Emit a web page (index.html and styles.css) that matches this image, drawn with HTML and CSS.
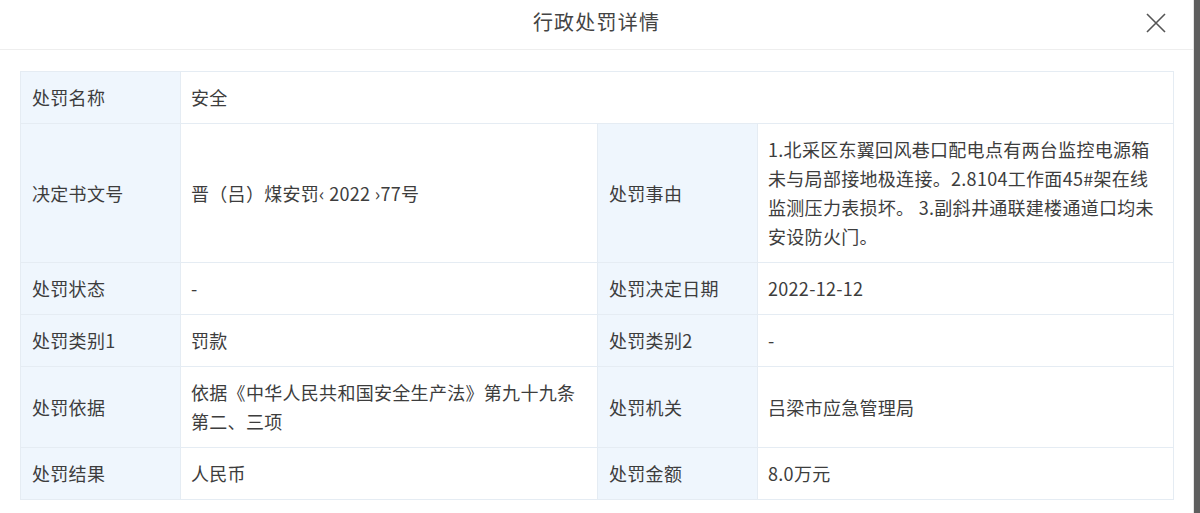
FILE: index.html
```html
<!DOCTYPE html>
<html lang="zh-CN">
<head>
<meta charset="utf-8">
<title>行政处罚详情</title>
<link rel="stylesheet" href="styles.css">
</head>
<body>
<div class="screen">
  <div class="modal">
    <div class="modal-header">
      <div class="modal-title">行政处罚详情</div>
      <button class="close-btn" aria-label="关闭">
        <svg width="20" height="20" viewBox="0 0 20 20"><path d="M1 1 L19 19 M19 1 L1 19" stroke="#555" stroke-width="1.6" fill="none"/></svg>
      </button>
    </div>
    <div class="modal-body">
      <table class="detail">
        <colgroup>
          <col class="c-label"><col class="c-value"><col class="c-label"><col class="c-value2">
        </colgroup>
        <tr>
          <th>处罚名称</th>
          <td colspan="3">安全</td>
        </tr>
        <tr>
          <th>决定书文号</th>
          <td>晋（吕）煤安罚‹ 2022 ›77号</td>
          <th>处罚事由</th>
          <td>1.北采区东翼回风巷口配电点有两台监控电源箱未与局部接地极连接。2.8104工作面45#架在线监测压力表损坏。 3.副斜井通联建楼通道口均未安设防火门。</td>
        </tr>
        <tr>
          <th>处罚状态</th>
          <td>-</td>
          <th>处罚决定日期</th>
          <td>2022-12-12</td>
        </tr>
        <tr>
          <th>处罚类别1</th>
          <td>罚款</td>
          <th>处罚类别2</th>
          <td>-</td>
        </tr>
        <tr>
          <th>处罚依据</th>
          <td>依据《中华人民共和国安全生产法》第九十九条第二、三项</td>
          <th>处罚机关</th>
          <td>吕梁市应急管理局</td>
        </tr>
        <tr>
          <th>处罚结果</th>
          <td>人民币</td>
          <th>处罚金额</th>
          <td>8.0万元</td>
        </tr>
      </table>
    </div>
  </div>
  <div class="mask-edge"></div>
</div>
</body>
</html>
```
FILE: styles.css
```css
* { box-sizing: border-box; }
html, body {
  margin: 0;
  padding: 0;
  background: #fff;
}
body {
  font-family: "Noto Sans CJK SC", "Noto Sans", sans-serif;
  color: #3c3c3c;
}
.screen {
  display: flex;
  width: 1200px;
  height: 513px;
  overflow: hidden;
}
.modal {
  width: 1194px;
  background: #fff;
  border-right: 1px solid #e4e4e4;
}
.mask-edge {
  flex: 1;
  background: #5e5e5e;
}
.modal-header {
  position: relative;
  height: 50px;
  border-bottom: 1px solid #eeeeee;
  display: flex;
  align-items: center;
  justify-content: center;
}
.modal-title {
  font-size: 20px;
  color: #444;
  letter-spacing: 1.2px;
  margin-top: -6px;
}
.close-btn {
  position: absolute;
  right: 27px;
  top: 13px;
  width: 20px;
  height: 20px;
  padding: 0;
  border: 0;
  background: none;
  display: flex;
}
.modal-body {
  padding: 21px 20px 0 20px;
}
.detail {
  width: 1153px;
  border-collapse: collapse;
  table-layout: fixed;
  font-size: 18px;
  letter-spacing: 0.3px;
  line-height: 29px;
}
.c-label { width: 160px; }
.c-value { width: 417px; }
.c-value2 { width: 416px; }
.detail th, .detail td {
  border: 1px solid #e5ecf3;
  padding: 11px 10px 11px 10px;
  text-align: left;
  vertical-align: middle;
  font-weight: normal;
  color: #3d3d3d;
}
.detail th {
  background: #eff6fd;
  padding-left: 11px;
}
.detail td {
  background: #fff;
}
```
